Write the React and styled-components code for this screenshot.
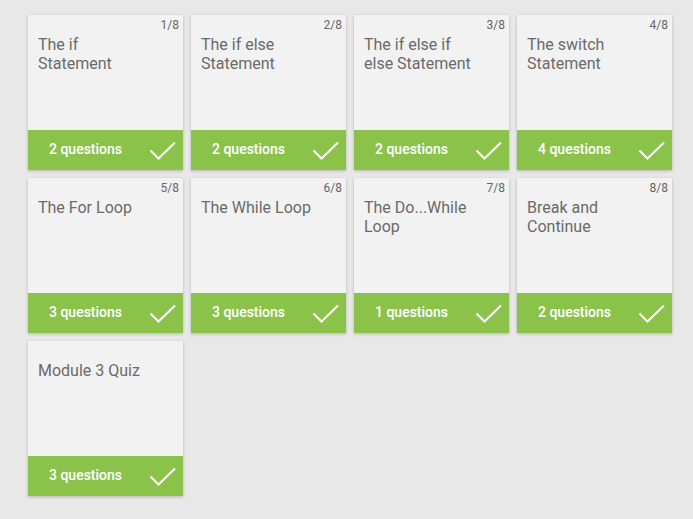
import React from "react";
import styled, { createGlobalStyle } from "styled-components";

const Global = createGlobalStyle`
  html, body { margin: 0; padding: 0; background: #e8e8e8; }
  body { font-family: Roboto, "Noto Sans", sans-serif; }
`;

const Page = styled.div`
  padding: 15px 28px;
  min-height: 519px;
  box-sizing: border-box;
  background: #e8e8e8;
`;

const Grid = styled.div`
  display: grid;
  grid-template-columns: repeat(4, 155px);
  grid-auto-rows: 155px;
  gap: 8px;
`;

const Card = styled.div`
  position: relative;
  display: flex;
  flex-direction: column;
  background: #f2f2f2;
  box-shadow: 0 1px 3px rgba(0, 0, 0, 0.22);
`;

const Counter = styled.span`
  position: absolute;
  top: 3px;
  right: 4px;
  font-size: 12px;
  color: #666;
`;

const Title = styled.div`
  flex: 1;
  padding: 20px 10px 0 10px;
  font-size: 16px;
  line-height: 19px;
  color: #6a6a6a;
`;

const Footer = styled.div`
  height: 40px;
  box-sizing: border-box;
  background: #8bc34a;
  display: flex;
  align-items: center;
  justify-content: space-between;
  padding: 0 6px 2px 21px;
  color: #fff;
  font-size: 14px;
  font-weight: 500;
`;

const CheckBox = styled.svg`
  margin-top: 4px;
`;

const Check = () => (
  <CheckBox width="28" height="20" viewBox="0 0 28 20">
    <path d="M1.5 9.5 L9.5 17.5 L26 1.5" fill="none" stroke="#fff" strokeWidth="2" />
  </CheckBox>
);

const items = [
  { t: "The if\nStatement", q: 2, n: "1/8" },
  { t: "The if else\nStatement", q: 2, n: "2/8" },
  { t: "The if else if\nelse Statement", q: 2, n: "3/8" },
  { t: "The switch\nStatement", q: 4, n: "4/8" },
  { t: "The For Loop", q: 3, n: "5/8" },
  { t: "The While Loop", q: 3, n: "6/8" },
  { t: "The Do...While\nLoop", q: 1, n: "7/8" },
  { t: "Break and\nContinue", q: 2, n: "8/8" },
  { t: "Module 3 Quiz", q: 3, n: null },
];

export default function App() {
  return (
    <Page>
      <Global />
      <Grid>
        {items.map((it, i) => (
          <Card key={i}>
            {it.n && <Counter>{it.n}</Counter>}
            <Title>
              {it.t.split("\n").map((l, j) => (
                <div key={j}>{l}</div>
              ))}
            </Title>
            <Footer>
              <span>{it.q} questions</span>
              <Check />
            </Footer>
          </Card>
        ))}
      </Grid>
    </Page>
  );
}
